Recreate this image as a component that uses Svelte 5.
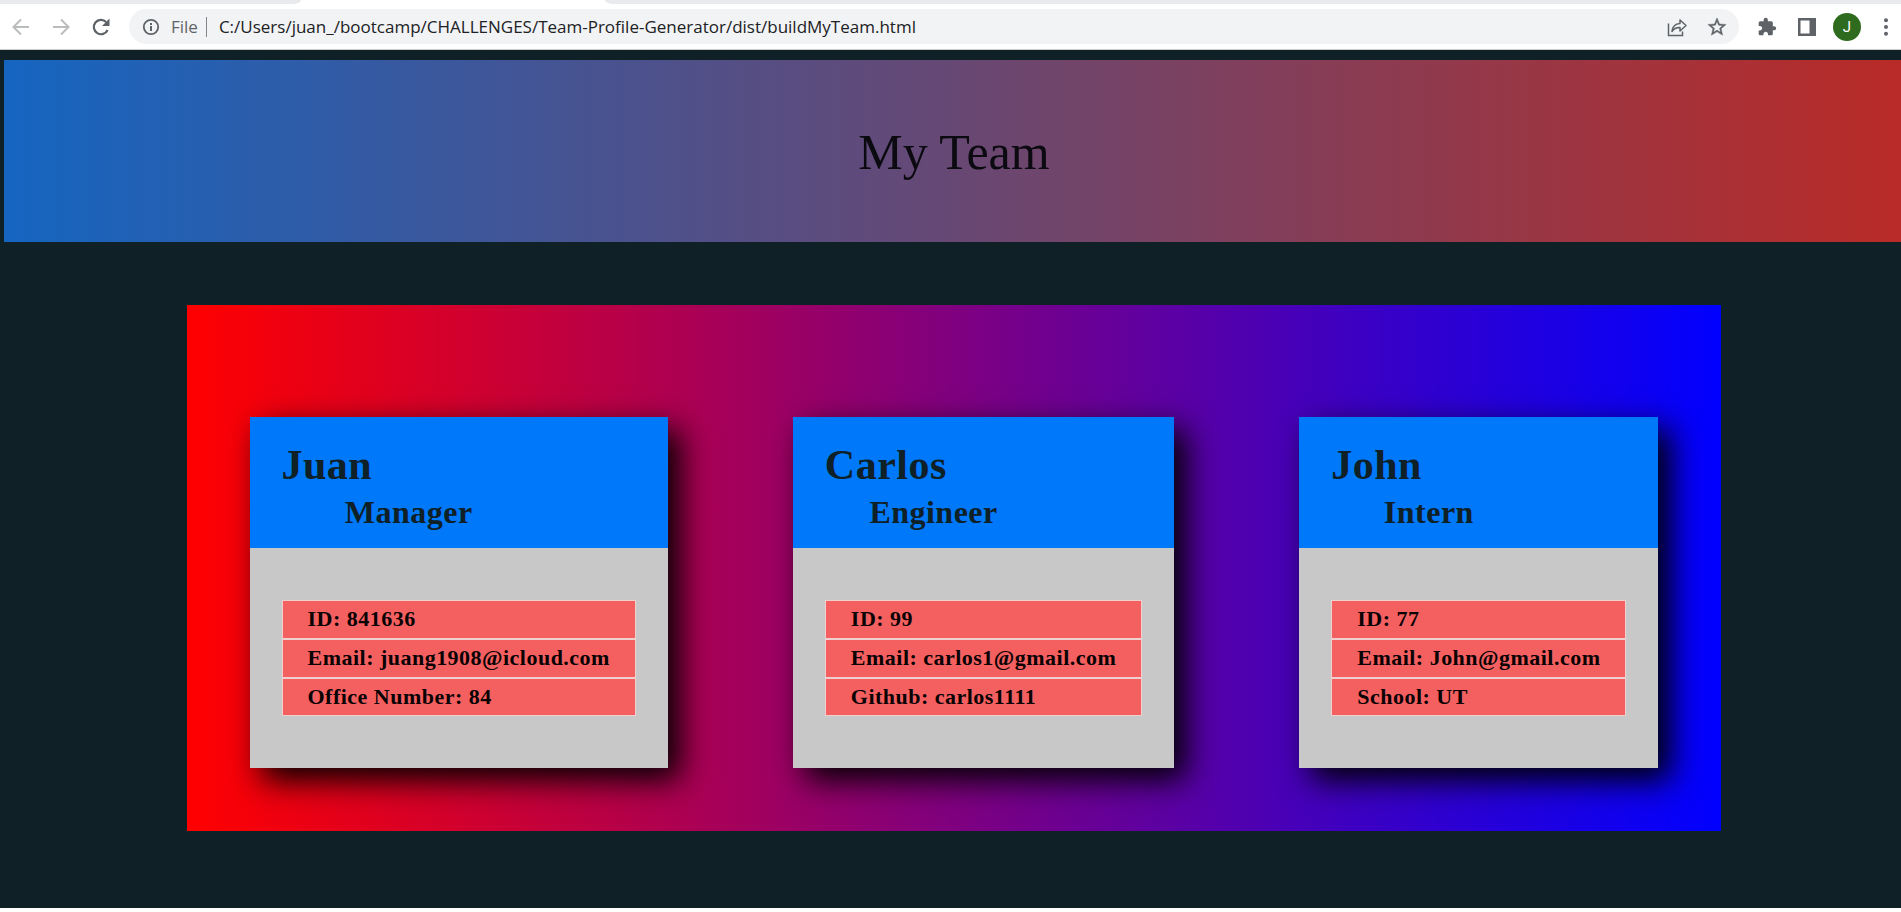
<script>
  const address = 'C:/Users/juan_/bootcamp/CHALLENGES/Team-Profile-Generator/dist/buildMyTeam.html';

  const team = [
    {
      name: 'Juan',
      role: 'Manager',
      facts: ['ID: 841636', 'Email: juang1908@icloud.com', 'Office Number: 84'],
    },
    {
      name: 'Carlos',
      role: 'Engineer',
      facts: ['ID: 99', 'Email: carlos1@gmail.com', 'Github: carlos1111'],
    },
    {
      name: 'John',
      role: 'Intern',
      facts: ['ID: 77', 'Email: John@gmail.com', 'School: UT'],
    },
  ];
</script>

<div class="browser">
  <div class="tabs"><span class="tab-before"></span><span class="tab-after"></span></div>
  <div class="toolbar">
    <button class="tool faded" aria-label="Back">
      <svg width="24" height="24" viewBox="0 0 24 24"><path d="M20 12H5M12 4.5L4.5 12L12 19.5" fill="none" stroke="currentColor" stroke-width="2" /></svg>
    </button>
    <button class="tool faded" aria-label="Forward">
      <svg width="24" height="24" viewBox="0 0 24 24"><path d="M4 12H19M12 4.5L19.5 12L12 19.5" fill="none" stroke="currentColor" stroke-width="2" /></svg>
    </button>
    <button class="tool" aria-label="Reload">
      <svg width="24" height="24" viewBox="0 0 24 24">
        <path d="M18.6 15A7.2 7.2 0 1 1 17.2 7" fill="none" stroke="currentColor" stroke-width="2.2" />
        <path d="M20.5 3.5V11H13z" fill="currentColor" />
      </svg>
    </button>
    <div class="omnibox">
      <svg width="20" height="20" viewBox="0 0 20 20">
        <circle cx="10" cy="10" r="7.2" fill="none" stroke="currentColor" stroke-width="1.8" />
        <path d="M9 9h2v5H9zM9 6h2v2H9z" fill="currentColor" />
      </svg>
      <label class="scheme" for="address">File</label>
      <span class="divider"></span>
      <input id="address" type="text" value={address} spellcheck="false" />
      <button class="tool" aria-label="Share">
        <svg width="24" height="24" viewBox="0 0 24 24" fill="none" stroke="currentColor" stroke-width="1.5">
          <path d="M3.5 8.5V20.5H17.5V16.5" />
          <path d="M7 16.5C7.5 11.5 10.5 8.8 15 8.5V5L21 10.5L15 16V12.5C11.5 12.3 9 13.5 7 16.5z" stroke-linejoin="round" />
        </svg>
      </button>
      <button class="tool" aria-label="Bookmark">
        <svg width="22" height="22" viewBox="0 0 24 24"><path d="M22 9.24l-7.19-.62L12 2 9.19 8.63 2 9.24l5.46 4.73L5.82 21 12 17.27 18.18 21l-1.63-7.03L22 9.24zM12 15.4l-3.76 2.27 1-4.28-3.32-2.88 4.38-.38L12 6.1l1.71 4.04 4.38.38-3.32 2.88 1 4.28L12 15.4z" fill="currentColor" stroke="currentColor" stroke-width="0.4" /></svg>
      </button>
    </div>
    <button class="tool" aria-label="Extensions">
      <svg width="20" height="20" viewBox="0 0 24 24"><path d="M20.5 11H19V7c0-1.1-.9-2-2-2h-4V3.5C13 2.12 11.88 1 10.5 1S8 2.12 8 3.5V5H4c-1.1 0-1.99.9-1.99 2v3.8H3.5c1.49 0 2.7 1.21 2.7 2.7s-1.21 2.7-2.7 2.7H2V20c0 1.1.9 2 2 2h3.8v-1.5c0-1.49 1.21-2.7 2.7-2.7 1.49 0 2.7 1.21 2.7 2.7V22H17c1.1 0 2-.9 2-2v-4h1.5c1.38 0 2.5-1.12 2.5-2.5S21.88 11 20.5 11z" fill="currentColor" /></svg>
    </button>
    <button class="tool" aria-label="Side panel">
      <svg width="18" height="18" viewBox="0 0 18 18"><path d="M0 0h18v18H0zM2.5 2.5v13h9v-13z" fill="currentColor" fill-rule="evenodd" /></svg>
    </button>
    <button class="tool" aria-label="Profile"><span class="avatar">J</span></button>
    <button class="tool last" aria-label="Menu">
      <svg width="4" height="18" viewBox="0 0 4 18" fill="currentColor"><circle cx="2" cy="2.3" r="2" /><circle cx="2" cy="9" r="2" /><circle cx="2" cy="15.7" r="2" /></svg>
    </button>
  </div>
</div>

<div class="page">
  <header class="banner"><h1>My Team</h1></header>
  <main>
    <div class="panel">
      {#each team as member}
        <article class="card">
          <div class="card-head">
            <h2>{member.name}</h2>
            <h3>{member.role}</h3>
          </div>
          <ul>
            {#each member.facts as fact}
              <li>{fact}</li>
            {/each}
          </ul>
        </article>
      {/each}
    </div>
  </main>
</div>

<style>
  :global(body) {
    margin: 0;
    background: #fff;
    overflow-x: hidden;
  }

  .browser {
    background: #fff;
    border-bottom: 1px solid #c9cdd0;
    font-family: 'Open Sans', 'Noto Sans', sans-serif;
    color: #5f6368;
  }

  .tabs {
    display: flex;
    justify-content: space-between;
    height: 4px;
  }

  .tab-before,
  .tab-after {
    background: #e8eaed;
  }

  .tab-before {
    width: 301px;
    border-bottom-right-radius: 8px 4px;
  }

  .tab-after {
    flex: 1;
    margin-left: 304px;
    border-bottom-left-radius: 8px 4px;
  }

  .toolbar {
    display: flex;
    align-items: center;
    height: 45px;
    padding-left: 1px;
  }

  .tool {
    display: flex;
    flex: none;
    align-items: center;
    justify-content: center;
    width: 40px;
    height: 35px;
    padding: 0;
    border: 0;
    background: none;
    color: #5f6368;
    font: inherit;
  }

  .tool.faded {
    color: #babcbe;
  }

  .tool.last {
    width: 34px;
    padding-left: 4px;
  }

  .omnibox {
    display: flex;
    flex: 1;
    align-items: center;
    height: 35px;
    margin: 0 8px;
    padding: 0 2px 0 12px;
    border-radius: 18px;
    background: #f1f3f4;
    font-size: 17px;
  }

  .scheme {
    margin: 0 8px 0 10px;
  }

  .divider {
    width: 1px;
    height: 20px;
    margin-right: 12px;
    background: #80868b;
  }

  input {
    flex: 1;
    min-width: 0;
    padding: 0;
    border: 0;
    outline: 0;
    background: none;
    color: #202124;
    font: inherit;
  }

  .avatar {
    width: 28px;
    border-radius: 50%;
    background: #2e6b1e;
    color: #fff;
    font-family: Roboto, sans-serif;
    font-size: 15px;
    line-height: 28px;
  }

  .page {
    padding: 10px 0 77px 4px;
    overflow: hidden;
    background: #0f2027;
    font-family: 'Liberation Serif', 'Times New Roman', serif;
  }

  /* The banner and the panel run a little past the right edge of the window. */
  .banner,
  main {
    margin-right: -3px;
  }

  .banner {
    padding: 64px 0 62px;
    background: linear-gradient(to right, #1565c0, #b92b27);
    text-align: center;
  }

  h1,
  h2,
  h3 {
    margin: 0;
  }

  h1 {
    color: #0b0a10;
    font-size: 50px;
    font-weight: 400;
    line-height: 56px;
  }

  main {
    display: flex;
    justify-content: center;
    padding-top: 63px;
  }

  .panel {
    display: flex;
    gap: 125px;
    padding: 112px 63px 63px;
    background: linear-gradient(to right, #f00, #00f);
  }

  .card {
    background: #c8c8c8;
    box-shadow: 12px 12px 30px #000;
    font-weight: 700;
    letter-spacing: 0.03em;
  }

  .card-head {
    padding: 22px 32px 15px;
    background: #0078fa;
    color: #0f2027;
  }

  h2 {
    font-size: 42px;
    line-height: 52px;
  }

  h3 {
    margin-right: 100px;
    font-size: 32px;
    line-height: 42px;
    text-align: center;
  }

  ul {
    margin: 0;
    padding: 52px 32px;
    list-style: none;
  }

  li {
    padding: 4px 25px 5px;
    border: 1px solid #f0cfcf;
    background: #f46060;
    color: #0a0203;
    font-size: 22px;
    line-height: 28px;
    white-space: nowrap;
  }

  li:last-child {
    padding-bottom: 4px;
  }
</style>
